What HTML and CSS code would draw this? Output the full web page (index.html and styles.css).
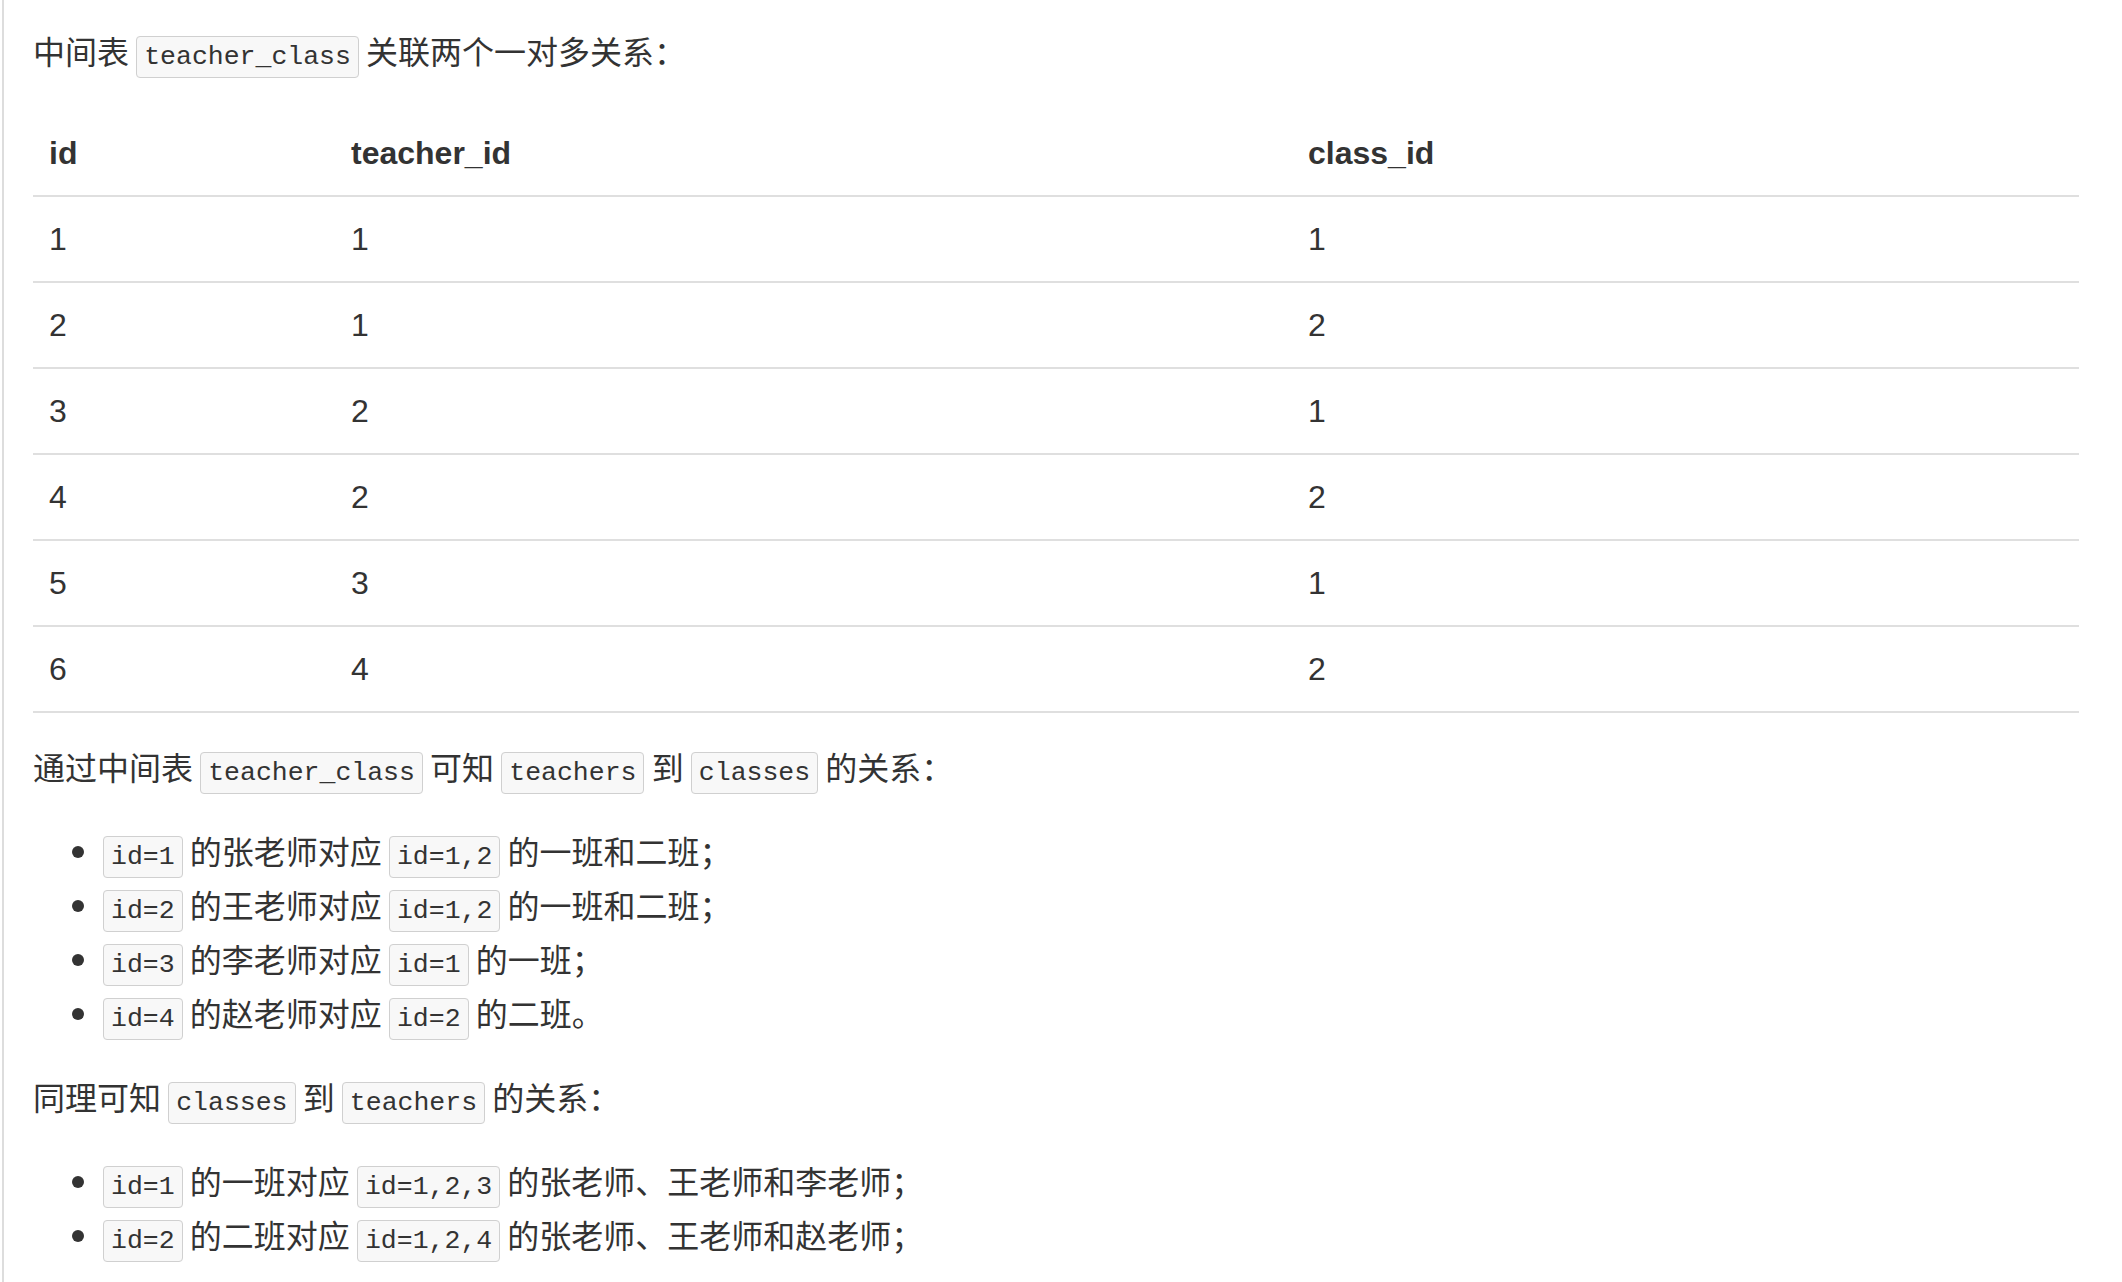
FILE: index.html
```html
<!DOCTYPE html>
<html lang="zh-CN">

<head>
	<meta charset="UTF-8">
	<title>中间表</title>
	<link rel="stylesheet" href="styles.css">
</head>

<body>
	<div class="article">
		<p>中间表 <code>teacher_class</code> 关联两个一对多关系：</p>
		<table>
			<thead>
				<tr>
					<th class="col-id">id</th>
					<th class="col-teacher">teacher_id</th>
					<th>class_id</th>
				</tr>
			</thead>
			<tbody>
				<tr><td>1</td><td>1</td><td>1</td></tr>
				<tr><td>2</td><td>1</td><td>2</td></tr>
				<tr><td>3</td><td>2</td><td>1</td></tr>
				<tr><td>4</td><td>2</td><td>2</td></tr>
				<tr><td>5</td><td>3</td><td>1</td></tr>
				<tr><td>6</td><td>4</td><td>2</td></tr>
			</tbody>
		</table>
		<p>通过中间表 <code>teacher_class</code> 可知 <code>teachers</code> 到 <code>classes</code> 的关系：</p>
		<ul>
			<li><code>id=1</code> 的张老师对应 <code>id=1,2</code> 的一班和二班；</li>
			<li><code>id=2</code> 的王老师对应 <code>id=1,2</code> 的一班和二班；</li>
			<li><code>id=3</code> 的李老师对应 <code>id=1</code> 的一班；</li>
			<li><code>id=4</code> 的赵老师对应 <code>id=2</code> 的二班。</li>
		</ul>
		<p>同理可知 <code>classes</code> 到 <code>teachers</code> 的关系：</p>
		<ul>
			<li><code>id=1</code> 的一班对应 <code>id=1,2,3</code> 的张老师、王老师和李老师；</li>
			<li><code>id=2</code> 的二班对应 <code>id=1,2,4</code> 的张老师、王老师和赵老师；</li>
		</ul>
	</div>
</body>

</html>
```

FILE: styles.css
```css
html,
body {
	margin: 0;
	height: 100%;
	background: #fff;
}

.article {
	box-sizing: border-box;
	min-height: 100%;
	margin-left: 2px;
	border-left: 2px solid #dddddd;
	padding: 27px 43px 0 29px;
	font: 32px/46px "Noto Sans CJK SC", sans-serif;
	color: #333;
}

/* 中文字体基线偏低，用行高+下内边距把文字往上提一点 */
p {
	margin: 30px 0;
	padding-bottom: 8px;
}

.article > p:first-child {
	margin-top: 0;
}

code {
	font: 26.5px/1 "Liberation Mono", monospace;
	padding: 5px 7px;
	border: 1px solid #d0d0d0;
	border-radius: 4px;
	background: #f8f8f8;
	color: #333;
}

table {
	width: 100%;
	border-collapse: collapse;
	font-family: "Liberation Sans", "Noto Sans CJK SC", sans-serif;
	font-size: 32px;
	line-height: 54px;
	margin: 30px 0;
}

th,
td {
	padding: 15px 16px;
	text-align: left;
	border-bottom: 2px solid #dfdfdf;
}

th {
	font-weight: bold;
}

.col-id {
	width: 270px;
}

.col-teacher {
	width: 925px;
}

ul {
	margin: 30px 0;
	padding-left: 70px;
}

li {
	padding-bottom: 8px;
}
```
